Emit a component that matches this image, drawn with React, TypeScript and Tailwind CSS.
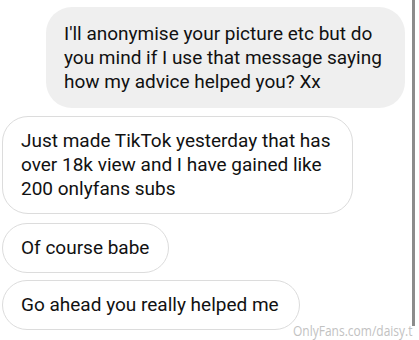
import React from "react";

export default function App() {
  const font = { fontFamily: "Roboto, 'Noto Sans', sans-serif" };
  return (
    <div className="relative w-[419px] h-[340px] bg-white overflow-hidden" style={font}>
      <div className="flex h-full">
        <div className="w-[412px] flex flex-col pt-[7px]">
          <div className="ml-[46px] w-[359px] rounded-[26px] bg-[#efefef] pl-[18px] pr-[10px] pt-[15px] pb-[14px] text-[19px] leading-[24px] text-[#111]">
            I'll anonymise your picture etc but do you mind if I use that message saying how my advice helped you? Xx
          </div>
          <div className="mt-[8px] ml-[2px] w-[351px] rounded-[26px] border border-[#dcdcdc] bg-white pl-[18px] pr-[10px] py-[12px] text-[19px] leading-[24px] text-[#111]">
            Just made TikTok yesterday that has over 18k view and I have gained like 200 onlyfans subs
          </div>
          <div className="mt-[9px] ml-[2px] w-[167px] rounded-[26px] border border-[#dcdcdc] bg-white pl-[18px] py-[12px] text-[19px] leading-[24px] text-[#111]">
            Of course babe
          </div>
          <div className="mt-[7px] ml-[2px] w-[298px] rounded-[26px] border border-[#dcdcdc] bg-white pl-[18px] py-[12px] text-[19px] leading-[24px] text-[#111]">
            Go ahead you really helped me
          </div>
        </div>
        <div className="w-[3px] h-[326px] bg-[#8c8c8c]" />
      </div>
      <div
        className="absolute left-[293px] top-[320px] text-[15px] leading-[20px] text-[#c2c2c2] whitespace-nowrap origin-left scale-x-[0.8]"
        style={{ fontFamily: "'Open Sans', sans-serif" }}
      >
        OnlyFans.com/daisy.t
      </div>
    </div>
  );
}
